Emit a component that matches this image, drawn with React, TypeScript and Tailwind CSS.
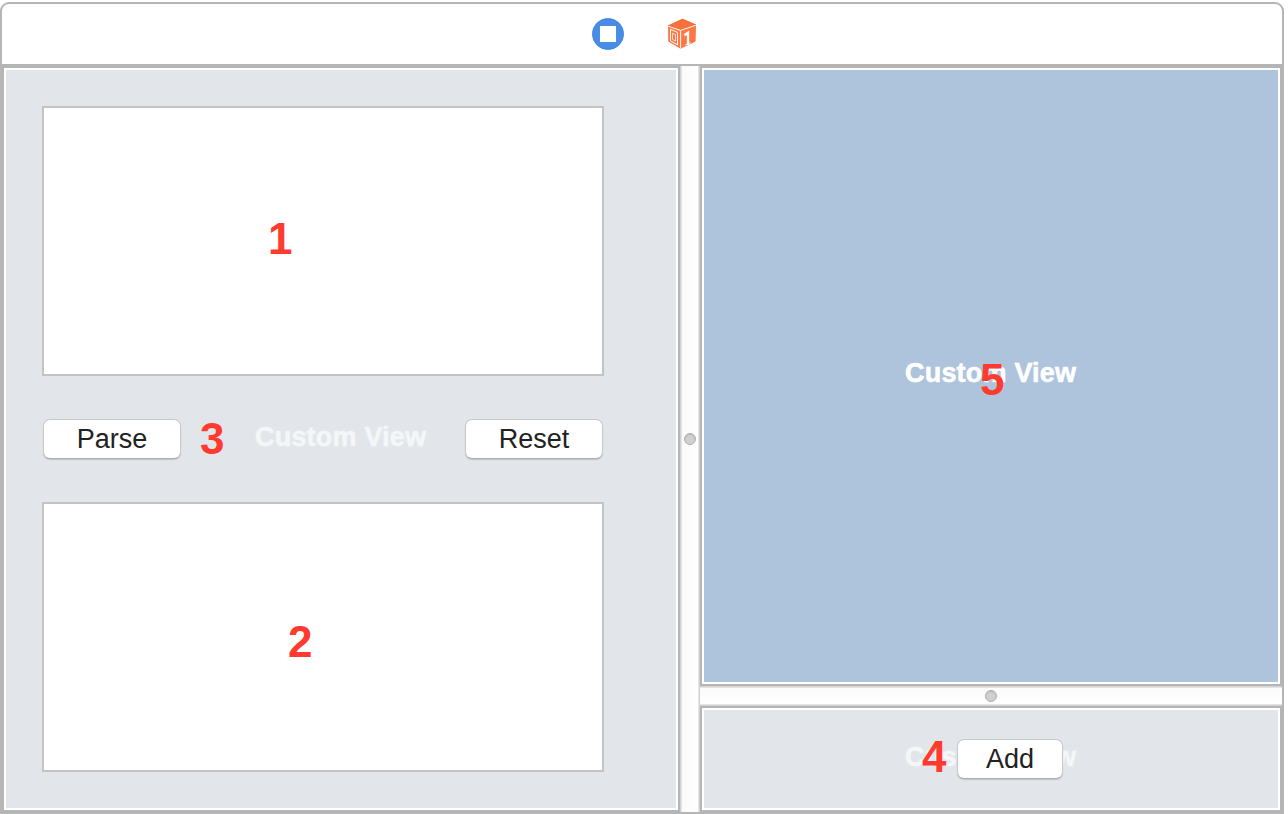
import React from "react";

type PaneProps = { className: string; children?: React.ReactNode };

function Pane({ className, children }: PaneProps) {
  return (
    <section className={`relative border-2 border-[#b5b5b5] ${className}`}>
      <div className="h-full w-full border-2 border-white">{children}</div>
    </section>
  );
}

function Marker({ value, className }: { value: string; className: string }) {
  return (
    <span className={`absolute z-10 text-[44px] leading-[44px] font-bold text-[#ff3b30] ${className}`}>
      {value}
    </span>
  );
}

function PlaceholderLabel({ className }: { className: string }) {
  return (
    <span
      className={`absolute text-[27px] leading-[30px] font-bold tracking-[0.2px] whitespace-nowrap [-webkit-text-stroke:0.6px_currentColor] ${className}`}
    >
      Custom View
    </span>
  );
}

function PushButton({ label, className }: { label: string; className: string }) {
  return (
    <button
      className={`relative flex h-10 items-center justify-center rounded-[7px] border border-[#c6c8cb] border-b-[#acafb2] bg-white text-[27px] leading-[30px] text-[#222] shadow-[0_1px_1px_rgba(0,0,0,0.16)] ${className}`}
    >
      {label}
    </button>
  );
}

function TextArea() {
  return <div className="relative h-[270px] w-[562px] border-2 border-[#c3c3c4] bg-white" />;
}

function Knob() {
  return <span className="block size-3 rounded-full border border-[#b0b0b0] bg-[#d0d0d0] shadow-[inset_0_1px_1px_#b8b8b8]" />;
}

function WindowIcon() {
  return (
    <svg width="32" height="32" viewBox="0 0 32 32" className="block">
      <circle cx="16" cy="16" r="15.6" fill="#488cea" stroke="#3c80de" strokeWidth="0.8" />
      <rect x="7.7" y="7.7" width="16.6" height="16.6" fill="#fff" stroke="#3479d3" strokeWidth="0.6" />
    </svg>
  );
}

function ResponderIcon() {
  return (
    <svg width="30" height="32" viewBox="0 0 30 32" className="block">
      <path d="M1 7.8 15.5 1 29 6.8 28.6 23.6 13.5 30.8 1.3 23.5Z" fill="#ff7844" />
      <path d="M1 7.8 15.5 1 29 6.8 13.6 12.2Z" fill="#f8703c" stroke="#e96835" strokeWidth="0.6" />
      <path d="M1.2 8.2 13.6 12.4 28.8 7.2M13.6 12.4V30.4" fill="none" stroke="#fff" strokeWidth="1" />
      <path d="M3.5 11.4 10.5 14.4V26.8L3.5 22.8Z" fill="none" stroke="#fff" strokeWidth="1" />
      <path d="M5.5 15.2 8.5 16.6V23L5.5 21.4Z" fill="none" stroke="#fff" strokeWidth="0.7" />
      <path d="M17.3 17.2 21 14.7V27" fill="none" stroke="#fff" strokeWidth="2.3" />
      <path d="M18.4 27 23.6 24.8" fill="none" stroke="#fff" strokeWidth="1" />
    </svg>
  );
}

export default function App() {
  return (
    <div className="h-[814px] w-[1288px] overflow-hidden bg-white pt-0.5 font-['Liberation_Sans',Arial,sans-serif]">
      <main className="flex h-[812px] w-[1284px] flex-col rounded-t-[9px] border-2 border-[#b5b5b5] bg-white">
        <header className="flex h-[62px] shrink-0 border-b-2 border-[#b5b5b5] pt-3.5 pl-[590px]">
          <WindowIcon />
          <div className="ml-[43px]">
            <ResponderIcon />
          </div>
        </header>
        <div className="flex min-h-0 flex-1">
          <Pane className="w-[678px] bg-[#e2e6eb]">
            <div className="flex flex-col pt-9 pl-9">
              <TextArea />
              <div className="flex h-[126px] w-[562px] items-center justify-between px-px">
                <PushButton label="Parse" className="w-[138px]" />
                <PushButton label="Reset" className="w-[138px]" />
              </div>
              <TextArea />
            </div>
            <PlaceholderLabel className="top-[354px] left-[251px] text-[#f4f6f8]" />
            <Marker value="1" className="top-[149px] left-[264px]" />
            <Marker value="2" className="top-[552px] left-[284px]" />
            <Marker value="3" className="top-[349px] left-[196px]" />
          </Pane>
          <div className="flex w-5 items-center justify-center border-x border-[#d2d2d2] bg-linear-to-r from-[#fafafa] to-white shadow-[inset_1px_0_#e4e4e4,inset_-1px_0_#e4e4e4]">
            <Knob />
          </div>
          <div className="flex w-[582px] flex-col">
            <Pane className="h-[620px] bg-[#aec3dc]">
              <PlaceholderLabel className="top-[290px] left-[203px] text-white" />
              <Marker value="5" className="top-[290px] left-[278px]" />
            </Pane>
            <div className="flex h-5 items-center justify-center border-y border-[#d2d2d2] bg-linear-to-b from-[#fafafa] to-white shadow-[inset_0_1px_#e4e4e4,inset_0_-1px_#e4e4e4]">
              <Knob />
            </div>
            <Pane className="h-[106px] bg-[#e2e6eb]">
              <PlaceholderLabel className="top-[34px] left-[203px] text-[#f4f6f8]" />
              <div className="pt-[29px] pl-[253px]">
                <PushButton label="Add" className="w-[106px]" />
              </div>
              <Marker value="4" className="top-[27px] left-[220px]" />
            </Pane>
          </div>
        </div>
      </main>
    </div>
  );
}
